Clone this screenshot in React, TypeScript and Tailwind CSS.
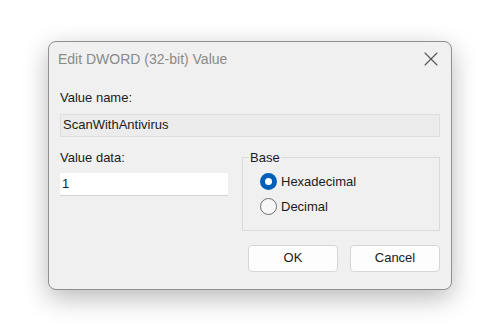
import { X } from "lucide-react";

const FONT = { fontFamily: '"Liberation Sans", Arial, sans-serif' };

function Radio({ checked, label }: { checked?: boolean; label: string }) {
  return (
    <label className="flex h-[20px] items-center gap-[4px]">
      {checked ? (
        <span className="flex h-[17px] w-[17px] items-center justify-center rounded-full bg-[#005fb8]">
          <span className="h-[7px] w-[7px] rounded-full bg-white" />
        </span>
      ) : (
        <span className="h-[17px] w-[17px] rounded-full border border-[#6f6f6f] bg-[#f7f7f7]" />
      )}
      <span>{label}</span>
    </label>
  );
}

export default function App() {
  return (
    <div
      className="flex h-[330px] w-[500px] items-center justify-center bg-white text-[13px] leading-[16px] text-[#1b1b1b]"
      style={FONT}
    >
      <div className="w-[404px] rounded-[8px] border border-[#8f8f8f] bg-[#f0f0f0] shadow-[0_8px_26px_rgba(0,0,0,0.28)]">
        <div className="flex h-[34px] items-center justify-between pl-[9px] pr-[8px]">
          <span className="text-[14px] text-[#8a8a8a]">Edit DWORD (32-bit) Value</span>
          <X size={24} strokeWidth={1.1} className="text-[#555555]" />
        </div>
        <div className="px-[11px] pb-[17px] pt-[14px]">
          <div>Value name:</div>
          <div className="mt-[8px] flex h-[23px] items-center border border-[#dedede] bg-[#ececec] px-[2px]">
            ScanWithAntivirus
          </div>
          <div className="mt-[13px] flex gap-[14px]">
            <div className="w-[168px]">
              <div>Value data:</div>
              <div className="mt-[7px] flex h-[23px] items-center border-b border-[#d4d4d4] bg-white px-[2px]">
                1
              </div>
            </div>
            <fieldset className="h-[81px] flex-1 border border-[#dadada] px-[17px]">
              <legend className="-ml-[11px] px-[1px] text-[13px]">Base</legend>
              <div className="mt-[6px] flex flex-col gap-[5px]">
                <Radio checked label="Hexadecimal" />
                <Radio label="Decimal" />
              </div>
            </fieldset>
          </div>
          <div className="mt-[14px] flex justify-end gap-[12px]">
            <button
              type="button"
              className="h-[27px] w-[90px] rounded-[4px] border border-[#d6d6d6] bg-[#fdfdfd] text-[13px]"
            >
              OK
            </button>
            <button
              type="button"
              className="h-[27px] w-[90px] rounded-[4px] border border-[#d6d6d6] bg-[#fdfdfd] text-[13px]"
            >
              Cancel
            </button>
          </div>
        </div>
      </div>
    </div>
  );
}
